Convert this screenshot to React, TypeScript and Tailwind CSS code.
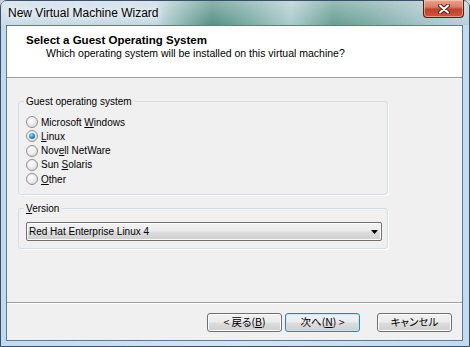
const UI = "font-['Liberation_Sans',Arial,sans-serif]";
const JP = "font-['Noto_Sans_CJK_JP',sans-serif] [font-feature-settings:'palt']";

const OS_OPTIONS = [
  { key: "windows", before: "Microsoft ", mnemonic: "W", after: "indows" },
  { key: "linux", before: "", mnemonic: "L", after: "inux", checked: true },
  { key: "netware", before: "Nov", mnemonic: "e", after: "ll NetWare" },
  { key: "solaris", before: "Sun ", mnemonic: "S", after: "olaris" },
  { key: "other", before: "", mnemonic: "O", after: "ther" },
];

function Radio({ checked }: { checked?: boolean }) {
  return (
    <span className="flex h-[12px] w-[12px] shrink-0 items-center justify-center rounded-full border border-[#8e8f8f] bg-[radial-gradient(circle_at_40%_35%,#ffffff_0%,#eeeeee_45%,#cfcfcf_100%)]">
      {checked && (
        <span className="h-[6px] w-[6px] rounded-full bg-[radial-gradient(circle_at_40%_35%,#9fe0ff_0%,#2f8fd6_45%,#0d4f94_100%)]" />
      )}
    </span>
  );
}

function VistaButton({
  children,
  focused,
}: {
  children: React.ReactNode;
  focused?: boolean;
}) {
  return (
    <button
      className={`flex h-[19px] w-[75px] items-center justify-center rounded-[3px] border text-[10.5px] leading-none text-black ${JP} bg-[linear-gradient(#f2f2f2_0%,#ebebeb_48%,#dddddd_52%,#cfcfcf_100%)] ${
        focused
          ? "border-[#3c7fb1] shadow-[inset_0_0_0_1px_#c5e6f8]"
          : "border-[#707070] shadow-[inset_0_0_0_1px_#fbfbfb]"
      }`}
    >
      {children}
    </button>
  );
}

export default function App() {
  return (
    <div className="h-[347px] w-[470px] overflow-hidden bg-[#c3ccd4]">
      <div className="flex h-[347px] w-[470px] flex-col rounded-t-[7px] border border-[#3a5068] bg-[linear-gradient(90deg,#c9dae6_0%,#c3d6e2_33%,#8db8b4_38%,#4d8b80_45%,#6ea39b_52%,#a8c8cc_62%,#5f998e_71%,#7aa9a4_80%,#9ebfc6_90%,#b6cedb_100%)]">
        {/* Title bar */}
        <div className="flex h-[24px] shrink-0 items-start justify-between bg-[linear-gradient(rgba(255,255,255,0.35),rgba(255,255,255,0.05))]">
          <span
            className={`pl-[7px] pt-[5px] text-[12px] leading-[15px] text-black ${UI} [text-shadow:0_0_6px_#fff,0_0_10px_#fff]`}
          >
            New Virtual Machine Wizard
          </span>
          <div className="mr-[5px] mt-[-1px] flex h-[18px] w-[41px] items-center justify-center rounded-b-[4px] border border-t-0 border-[#5b1c12] bg-[linear-gradient(#eba48f_0%,#d98068_40%,#c2412a_55%,#d0553c_100%)] shadow-[inset_0_0_0_1px_rgba(255,220,200,0.5)]">
            <svg width="12" height="10" viewBox="0 0 12 10">
              <path
                d="M2 1.5 L10 8.5 M10 1.5 L2 8.5"
                stroke="#4a1a12"
                strokeWidth="4"
                strokeLinecap="round"
              />
              <path
                d="M2 1.5 L10 8.5 M10 1.5 L2 8.5"
                stroke="#ffffff"
                strokeWidth="2.2"
                strokeLinecap="round"
              />
            </svg>
          </div>
        </div>

        {/* Frame around client area */}
        <div className="flex flex-1 flex-col bg-[linear-gradient(90deg,#c2daf0,#d3e5f3_50%,#c2daf0)] pb-[5px] pl-[5px] pr-[6px]">
          <div className={`flex h-[316px] flex-col border border-[#5f7c96] ${UI} text-black`}>
            {/* Header */}
            <div className="h-[52px] shrink-0 border-b border-[#a0a0a0] bg-white pl-[19px] pt-[8px]">
              <div className="text-[11.5px] font-bold leading-[13px]">
                Select a Guest Operating System
              </div>
              <div className="pl-[20px] text-[10.5px] leading-[13px]">
                Which operating system will be installed on this virtual machine?
              </div>
            </div>

            {/* Body */}
            <div className="flex h-[224px] shrink-0 flex-col bg-[#f0f0f0] pl-[11px] pt-[17px]">
              <fieldset className="h-[100px] w-[370px] rounded-[3px] border border-[#d5dfe5] pl-[7px] pt-[7px] shadow-[1px_1px_0_#fff]">
                <legend className="-ml-[2px] px-[2px] text-[10px] leading-[13px]">
                  Guest operating system
                </legend>
                {OS_OPTIONS.map((o) => (
                  <div key={o.key} className="flex h-[14.25px] items-center gap-[3px] text-[10px]">
                    <Radio checked={o.checked} />
                    <span className="leading-[13px]">
                      {o.before}
                      <span className="underline underline-offset-1">{o.mnemonic}</span>
                      {o.after}
                    </span>
                  </div>
                ))}
              </fieldset>

              <fieldset className="mt-[7px] h-[47px] w-[370px] rounded-[3px] border border-[#d5dfe5] pl-[7px] pt-[7px] shadow-[1px_1px_0_#fff]">
                <legend className="-ml-[2px] px-[2px] text-[10px] leading-[13px]">
                  <span className="underline underline-offset-1">V</span>ersion
                </legend>
                <div className="flex h-[19px] w-[356px] items-center justify-between rounded-[2px] border border-[#707070] bg-[linear-gradient(#f2f2f2_0%,#ebebeb_48%,#dddddd_52%,#cfcfcf_100%)] pl-[2px] pr-[3px] text-[10px] shadow-[inset_0_0_0_1px_#fbfbfb]">
                  <span className="leading-[13px]">Red Hat Enterprise Linux 4</span>
                  <svg width="7" height="4" viewBox="0 0 7 4">
                    <path d="M0 0 H7 L3.5 4 Z" fill="#000" />
                  </svg>
                </div>
              </fieldset>
            </div>

            {/* Footer */}
            <div className="flex h-[38px] shrink-0 items-start justify-end border-t border-[#a0a0a0] bg-[#f0f0f0] pr-[10px] pt-[10px] shadow-[inset_0_1px_0_#fff]">
              <VistaButton>
                &lt; 戻る(<span className="underline underline-offset-1">B</span>)
              </VistaButton>
              <div className="ml-[3px]">
                <VistaButton focused>
                  次へ(<span className="underline underline-offset-1">N</span>) &gt;
                </VistaButton>
              </div>
              <div className="ml-[17px]">
                <VistaButton>キャンセル</VistaButton>
              </div>
            </div>
          </div>
        </div>
      </div>
    </div>
  );
}
